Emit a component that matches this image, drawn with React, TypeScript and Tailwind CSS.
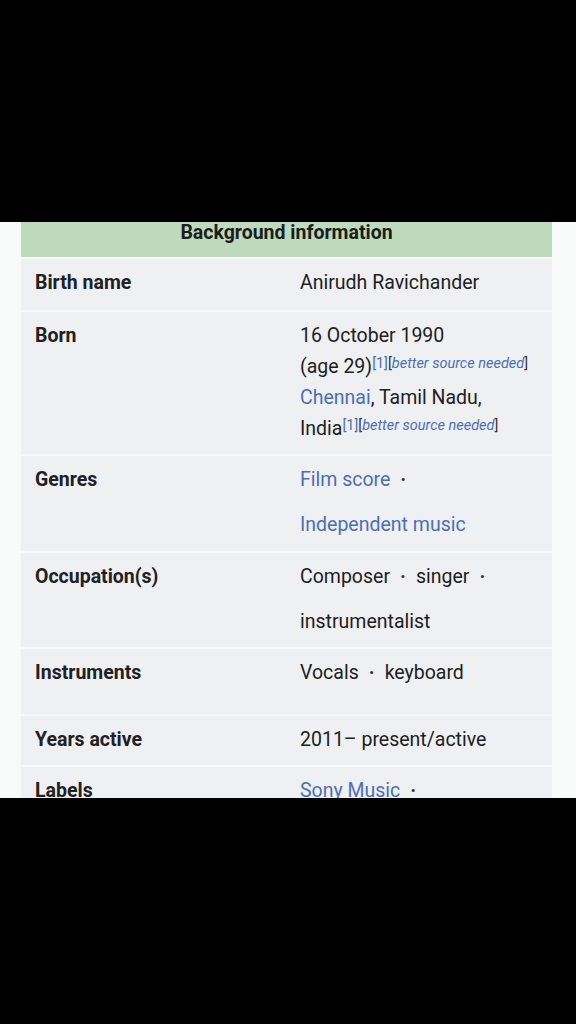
import React from "react";

const link = "text-[#4b6fb5]";
const dot = <span className="mx-[10px] font-bold text-[#333]">·</span>;

function Sup() {
  return (
    <sup className="text-[14.5px] leading-none relative -top-[5px] align-baseline">
      <span className={link}>[1]</span>
      <span className="text-[#333]">[</span>
      <i className={link}>better source needed</i>
      <span className="text-[#333]">]</span>
    </sup>
  );
}

function Row({
  label,
  h,
  children,
}: {
  label: string;
  h: string;
  children: React.ReactNode;
}) {
  return (
    <div className={`flex border-t-2 border-[#f7f8f9] ${h}`}>
      <div className="w-[279px] shrink-0 pl-[14px] pt-[8px] leading-[31px] font-bold text-[#202122]">
        {label}
      </div>
      <div className="flex-1 pt-[8px] leading-[31px] text-[#202122]">{children}</div>
    </div>
  );
}

export default function App() {
  return (
    <div
      className="w-[576px] h-[1024px] bg-black flex flex-col text-[19.5px]"
      style={{ fontFamily: "Roboto, 'Liberation Sans', sans-serif" }}
    >
      <div className="h-[222px] shrink-0" />
      <div className="h-[576px] shrink-0 bg-[#f8f9f9] overflow-hidden pl-[21px] pr-[24px]">
        <div className="bg-[#eff0f1] h-full">
          <div className="h-[35px] bg-[#bddbbc] text-center font-bold text-[#1b1d1c] text-[19.5px] leading-[22px]">
            Background information
          </div>
          <Row label="Birth name" h="h-[53px]">
            Anirudh Ravichander
          </Row>
          <Row label="Born" h="h-[144px]">
            <div>16 October 1990</div>
            <div>
              (age 29)
              <Sup />
            </div>
            <div>
              <span className={link}>Chennai</span>, Tamil Nadu,
            </div>
            <div>
              India
              <Sup />
            </div>
          </Row>
          <Row label="Genres" h="h-[97px]">
            <div>
              <span className={link}>Film score</span>
              {dot}
            </div>
            <div className="mt-[14px]">
              <span className={link}>Independent music</span>
            </div>
          </Row>
          <Row label="Occupation(s)" h="h-[96px]">
            <div>
              Composer{dot}singer{dot}
            </div>
            <div className="mt-[14px]">instrumentalist</div>
          </Row>
          <Row label="Instruments" h="h-[67px]">
            Vocals{dot}keyboard
          </Row>
          <Row label="Years active" h="h-[51px]">
            2011– present/active
          </Row>
          <Row label="Labels" h="h-[60px]">
            <span className={link}>Sony Music</span>
            {dot}
          </Row>
        </div>
      </div>
      <div className="flex-1" />
    </div>
  );
}
